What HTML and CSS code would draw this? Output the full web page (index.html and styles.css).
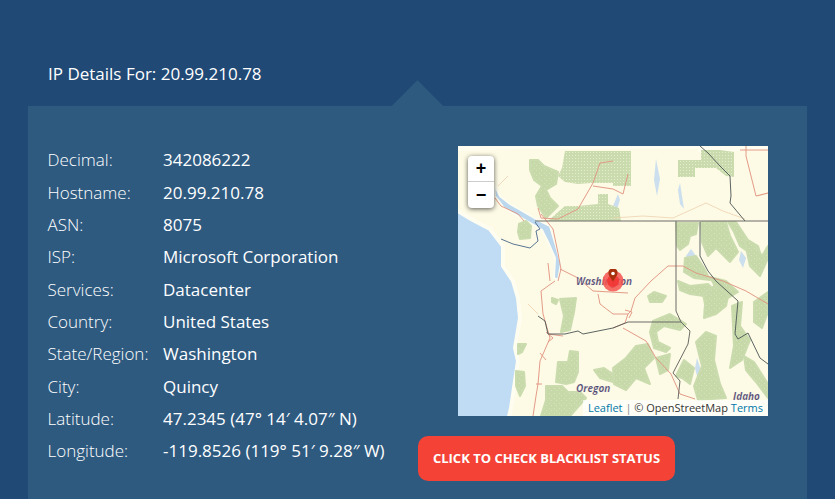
FILE: index.html
```html
<!DOCTYPE html>
<html lang="en">
<head>
<meta charset="utf-8">
<title>IP Details</title>
<link rel="stylesheet" href="styles.css">
</head>
<body>
<section class="page">
  <h1 class="heading">IP Details For: 20.99.210.78</h1>
  <div class="panel">
    <dl class="details">
      <dt>Decimal:</dt><dd>342086222</dd>
      <dt>Hostname:</dt><dd>20.99.210.78</dd>
      <dt>ASN:</dt><dd>8075</dd>
      <dt>ISP:</dt><dd>Microsoft Corporation</dd>
      <dt>Services:</dt><dd>Datacenter</dd>
      <dt>Country:</dt><dd>United States</dd>
      <dt>State/Region:</dt><dd>Washington</dd>
      <dt>City:</dt><dd>Quincy</dd>
      <dt>Latitude:</dt><dd>47.2345 (47° 14′ 4.07″ N)</dd>
      <dt>Longitude:</dt><dd>-119.8526 (119° 51′ 9.28″ W)</dd>
    </dl>
    <div class="side">
      <div class="map">
        <svg class="map-art" viewBox="0 0 310 270" width="310" height="270" aria-hidden="true">
          <defs>
            <pattern id="hatch" width="3" height="3" patternUnits="userSpaceOnUse">
              <rect width="3" height="3" class="hatch-bg"/>
              <rect width="1" height="1" class="hatch-dot"/>
            </pattern>
            <pattern id="mottle" width="5" height="5" patternUnits="userSpaceOnUse">
              <rect width="5" height="5" class="mottle-bg"/>
              <rect x="1" y="2" width="1" height="1" class="mottle-dot"/>
              <rect x="3" y="4" width="1" height="1" class="mottle-dot"/>
            </pattern>
            <filter id="soft" x="0" y="0" width="100%" height="100%">
              <feGaussianBlur stdDeviation="0.350"/>
            </filter>
          </defs>
          <g filter="url(#soft)">
            <rect width="310" height="270" class="land"/>
            <path class="pale" d="M0 0H310V4L240 6V3H60L0 5Z"/>
            <path class="water" d="M-5 62L13 73L32 83L45 100L45 120L55 135L60 152L62 172L57 202L60 215L57 235L53 262L50 275H-5Z"/>
            <path class="strait" d="M36 38L42 50L52 58L66 66L80 74L92 80L98 100L103 118L100 134L96 132L97 112L90 96L84 84L74 78L60 70L46 62L37 50Z"/>
            <path class="lake" d="M198 13L202 33L199 50L196 34Z M222 37L226 63L222 58L220 44Z M233 103L238 110L232 118L228 110Z M283 105L288 112L285 122L281 114Z M239 212L243 224L240 234L237 222Z M155 60L160 48L162 54L158 66Z"/>

            <path class="hatched" d="M107 5H173V40H155V37H133L120 38L107 36L100 30L104 22Z"/>
            <path class="hatched" d="M220 14H237V31H220Z"/>
            <path class="hatched" d="M237 14H243V4H262L276 6V31L268 30L258 22H237Z"/>
            <path class="hatched" d="M107 60L120 60L140 58V48H150V58L161 62L163 75H90L100 66Z"/>
            <path class="forest" d="M72 14L80 14L86 20L100 26L98 38L88 44L92 52L100 60L88 72L80 60L78 50L84 40L76 34L72 24Z"/>
            <path class="forest" d="M61 78L68 75L73 80L72 92L62 93L60 86Z"/>
            <path class="forest" d="M218 77H240L238 88L232 90L230 98L222 104L219 100Z"/>
            <path class="forest" d="M227 112L238 110L246 122L252 134L236 132L226 126Z"/>
            <path class="forest" d="M243 76H268L272 90L280 106L272 116L258 102L250 110L244 96Z"/>
            <path class="forest" d="M270 76H278L290 94L300 100L306 120L296 110L282 100L276 86Z"/>
            <path class="forest" d="M286 92L296 98L304 110L310 100V112L302 130L292 120Z"/>
            <path class="forest" d="M252 131L268 135L280 146L270 152L258 142Z"/>
            <path class="forest" d="M220 135L232 140L250 138L256 144L246 150L232 148L222 144Z"/>
            <path class="forest" d="M245 148L256 140L264 144L270 150L268 160L258 168L246 172L247 158Z"/>
            <path class="forest" d="M238 196L248 186L258 190L256 214L262 238L268 252L240 254L236 240L244 220Z"/>
            <path class="forest" d="M274 160L284 156L282 180L292 194L284 214L272 222L276 200Z"/>
            <path class="forest" d="M286 210L296 216L310 238V252L298 236L288 224Z"/>
            <path class="forest" d="M296 156L310 146V166L304 182L296 176Z"/>
            <path class="forest" d="M102 153L118 152L116 166L112 184L103 186L106 170Z M94 152L100 154L98 158L94 156Z"/>
            <path class="forest" d="M60 198L68 198L64 206L60 208Z M58 225L66 226L67 240L62 250L58 240Z"/>
            <path class="forest" d="M112 205L120 206L120 226L116 236L108 238L98 236L100 216H110Z"/>
            <path class="forest" d="M88 240H104L110 246L122 246L128 252L112 270H83L88 254Z"/>
            <path class="forest" d="M136 224L146 222L155 228V236L142 232Z"/>
            <path class="forest" d="M155 222L168 212L178 200L190 198L196 212L186 222L192 238L178 232L168 244L156 238Z"/>
            <path class="forest" d="M195 175L212 168L228 178L222 184L206 180L198 186L200 196L212 202L208 206L196 202L192 186Z"/>
            <path class="forest" d="M198 212L212 208L210 224L202 228Z"/>
            <path class="forest" d="M190 150L196 146L208 150L204 156L192 156Z M218 230L226 214L236 222L232 238L224 232Z"/>

            <path class="road-faint" d="M155 72L185 70L215 72L248 57L265 65L287 73M300 50L310 47M40 40L50 30M80 168L70 158"/>
            <path class="road" d="M37 52L43 60L60 68L66 75"/>
            <path class="road" d="M80 62L83 72L100 73L120 63L135 37L142 17L155 15M135 40L155 43L165 48L170 28"/>
            <path class="road" d="M83 68L95 83L100 107L103 123L100 135M90 117L92 135M102 123L120 132"/>
            <path class="road" d="M97 135L83 145L85 168L92 192L82 215L80 238L78 250L75 270M82 207L88 214M90 188L105 190"/>
            <path class="road" d="M120 132L135 145L170 147M193 135L177 152L173 165L170 168L167 177L155 182"/>
            <path class="road" d="M193 135L210 120L225 120L238 127L265 135L288 145L310 158"/>
            <path class="road" d="M140 148L142 158L155 168L170 168M165 182L188 195L198 212L213 228L222 248L237 253"/>
            <path class="road" d="M288 0V10L298 50L310 47M282 4H310"/>
            <path class="road" d="M167 164L174 166L171 172M88 186L95 192L90 196M78 238H84"/>

            <path class="border" d="M77 75H310"/>
            <path class="border" d="M218 75V165L223 176H170M223 176L232 185L230 198L215 227L222 235L220 253"/>
            <path class="state-line" d="M43 93L55 98L72 102L80 95L78 85L82 83L77 76"/>
            <path class="river" d="M242 0L250 7L262 20L272 30L273 50L272 57L287 75"/>
            <path class="river" d="M242 76V110L250 125L258 135L280 155L277 188L280 193L290 187L302 212L310 218"/>
            <path class="river" d="M80 170L87 175L90 188L107 188L120 185L125 188L155 182L170 176"/>
          </g>
          <text class="place" x="118" y="139">Washington</text>
          <text class="place" x="118" y="246">Oregon</text>
          <text class="place" x="275" y="254">Idaho</text>
          <circle class="pulse" cx="155" cy="135" r="10.500"/>
          <circle class="pulse-core" cx="155" cy="135" r="6"/>
          <path class="pin" d="M155 136C153.500 132 150.500 130.500 150.500 127C150.500 124.500 151.500 123 153 123H157C158.500 123 159.500 124.500 159.500 127C159.500 130.500 156.500 132 155 136Z"/>
          <circle class="pin-dot" cx="155" cy="127.500" r="1.800"/>
        </svg>
        <div class="zoom">
          <span class="zoom-btn">+</span>
          <span class="zoom-btn">−</span>
        </div>
        <div class="attribution"><a>Leaflet</a> <span class="sep">|</span> © OpenStreetMap <a>Terms</a></div>
      </div>
      <button class="check" type="button">Click to Check Blacklist Status</button>
    </div>
  </div>
</section>
</body>
</html>
```

FILE: styles.css
```css
* { box-sizing: border-box; }
html, body { margin: 0; height: 100%; overflow: hidden; }
body { font-family: "Open Sans", sans-serif; color: #fff; background: #204a75; }

.page { height: 499px; display: flex; flex-direction: column; padding: 62px 28px 0; }
.heading { margin: 0 0 20px 20px; font-size: 17px; font-weight: 400; line-height: 24px; }

.panel { position: relative; flex: 1; display: flex; background: #2e5a80; padding: 37.600px 19.500px 0 20px; }
.panel::before {
  content: "";
  position: absolute;
  left: 371px;
  top: -18px;
  width: 37px;
  height: 37px;
  background: #2e5a80;
  transform: rotate(45deg);
}

.details {
  position: relative;
  margin: 0 0 0 -0.500px;
  width: 370.500px;
  display: grid;
  grid-template-columns: 115.500px 1fr;
  grid-auto-rows: 32.330px;
  align-items: center;
  font-size: 17px;
  align-content: start;
}
.details dt { font-weight: 300; white-space: nowrap; }
.details dd { margin: 0; white-space: nowrap; }

.side { position: relative; display: flex; flex-direction: column; align-items: flex-start; padding-top: 2.400px; }
.map { position: relative; width: 310px; height: 270px; margin-left: 40px; overflow: hidden; color: #333; }
.map-art { display: block; }

.land { fill: #fdfae5; }
.pale { fill: #fefdf0; }
.water { fill: #bfdcf4; stroke: #fefdf0; stroke-width: 4; }
.strait { fill: #bcd8ee; stroke: #fefdf0; stroke-width: 2; }
.lake { fill: #cbdfee; }
.forest { fill: url(#mottle); stroke: #cadcae; stroke-width: 2; stroke-linejoin: round; }
.mottle-bg { fill: #c7d9a9; }
.mottle-dot { fill: #d6e3bd; }
.hatched { fill: url(#hatch); }
.hatch-bg { fill: #cadcae; }
.hatch-dot { fill: #e6ecce; }
.road { fill: none; stroke: #e0917e; stroke-width: 0.900; stroke-linejoin: round; }
.road-faint { fill: none; stroke: #edd2b0; stroke-width: 0.800; }
.border { fill: none; stroke: #6d6d68; stroke-width: 1; }
.state-line { fill: none; stroke: #47668c; stroke-width: 0.900; }
.river { fill: none; stroke: #4a5553; stroke-width: 0.900; }
.place { font: italic 700 10px "Open Sans", sans-serif; fill: #4c4470; stroke: #fdfbec; stroke-width: 0.200; }
.pulse { fill: #f4514e; fill-opacity: 0.85; }
.pulse-core { fill: #f23431; fill-opacity: 0.85; }
.pin { fill: #a8300c; }
.pin-dot { fill: #fff; }

.zoom {
  position: absolute;
  left: 10px;
  top: 10px;
  width: 26px;
  display: flex;
  flex-direction: column;
  background: #fff;
  border-radius: 4px;
  box-shadow: 0 1px 5px rgba(0, 0, 0, 0.65);
}
.zoom-btn {
  height: 26px;
  display: flex;
  align-items: center;
  justify-content: center;
  font: 700 18px/26px "Liberation Sans", sans-serif;
  color: #000;
}
.zoom-btn:first-child { border-bottom: 1px solid #ccc; }

.attribution {
  position: absolute;
  right: 0;
  bottom: 0;
  padding: 0 5px;
  font-size: 11px;
  line-height: 16px;
  background: rgba(255, 255, 255, 0.7);
  white-space: nowrap;
}
.attribution a { color: #0078a8; }
.sep { color: #8a8a8a; }

.check {
  margin-top: 20px;
  height: 45px;
  width: 257px;
  border: 0;
  border-radius: 10px;
  background: #f44336;
  color: #fff;
  font: 700 13px "Open Sans", sans-serif;
  text-transform: uppercase;
}
```
